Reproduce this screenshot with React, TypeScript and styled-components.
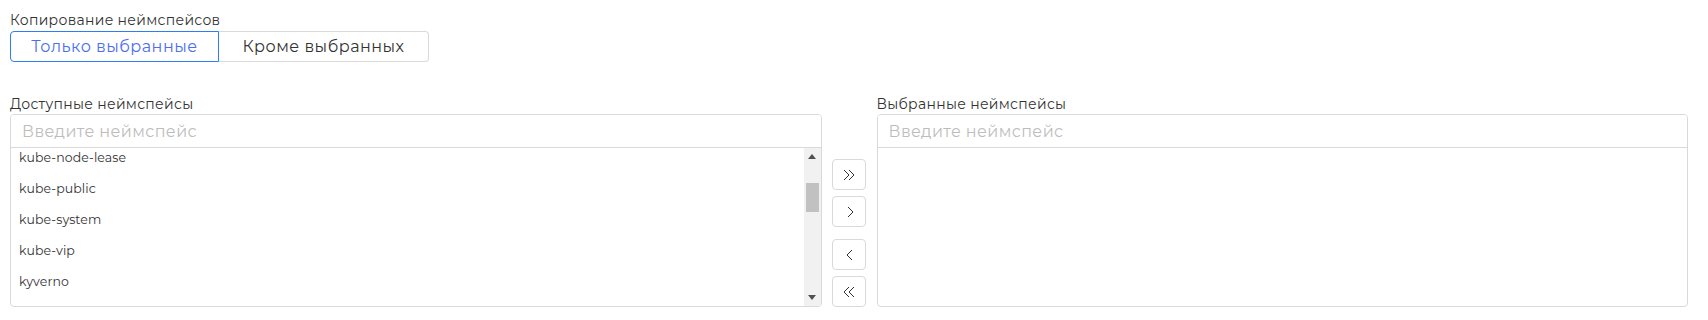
import React, { useEffect, useRef } from 'react'
import styled, { createGlobalStyle } from 'styled-components'

const ROW_HEIGHT = 31
const LIST_HEIGHT = 158
const ARROW_SIZE = 17
const SCROLL_TOP = 99

const namespaces = [
  'argocd',
  'cert-manager',
  'default',
  'kube-node-lease',
  'kube-public',
  'kube-system',
  'kube-vip',
  'kyverno',
  'longhorn-system',
  'metallb-system',
  'monitoring',
  'logging',
  'ingress-nginx',
  'vault',
  'velero',
  'harbor',
  'gitlab-runner',
  'istio-system',
  'keycloak',
  'postgres',
  'redis',
  'minio',
]

const GlobalStyle = createGlobalStyle`
  body {
    margin: 0;
    background: #fff;
    font-family: Montserrat, Inter, "Open Sans", sans-serif;
    color: #333;
  }
`

const Page = styled.div`
  padding: 10px 20px 0 10px;
`

const Label = styled.div`
  font-size: 14px;
  line-height: 20px;
  letter-spacing: 0.3px;
  color: #333;
`

const Toggle = styled.div`
  display: flex;
  margin-top: 1px;
`

const ToggleButton = styled.button<{ $active?: boolean; $side: 'left' | 'right' }>`
  width: ${(p) => (p.$side === 'left' ? 209 : 210)}px;
  height: 31px;
  font-family: inherit;
  font-size: 16px;
  letter-spacing: 0.5px;
  background: #fff;
  cursor: pointer;
  color: ${(p) => (p.$active ? '#4a6df5' : '#333')};
  border: 1px solid ${(p) => (p.$active ? '#2f7cf6' : '#d9d9d9')};
  ${(p) => (p.$side === 'right' ? 'border-left: none;' : '')}
  border-radius: ${(p) => (p.$side === 'left' ? '4px 0 0 4px' : '0 4px 4px 0')};
`

const DualList = styled.div`
  display: grid;
  grid-template-columns: 1fr 55px 1fr;
  margin-top: 32px;
`

const Column = styled.div`
  display: flex;
  flex-direction: column;
`

const Panel = styled.div`
  border: 1px solid #d9d9d9;
  border-radius: 4px;
  display: flex;
  flex-direction: column;
  overflow: hidden;
`

const Search = styled.input`
  height: 32px;
  border: none;
  border-bottom: 1px solid #d9d9d9;
  padding: 0 11px;
  font-family: inherit;
  font-size: 16px;
  letter-spacing: 0.4px;
  outline: none;
  color: #333;
  &::placeholder {
    color: #bdbdbd;
  }
`

const ListArea = styled.div`
  display: flex;
  height: ${LIST_HEIGHT}px;
`

const List = styled.ul`
  flex: 1;
  margin: 0;
  padding: 0;
  list-style: none;
  overflow: hidden;
`

const Item = styled.li`
  height: ${ROW_HEIGHT}px;
  line-height: ${ROW_HEIGHT}px;
  padding-left: 8px;
  font-size: 12.5px;
  letter-spacing: 0.1px;
  color: #333;
`

const Scrollbar = styled.div`
  width: 17px;
  background: #f1f1f1;
  display: flex;
  flex-direction: column;
`

const ArrowBox = styled.div`
  height: ${ARROW_SIZE}px;
  display: flex;
  align-items: center;
  justify-content: center;
`

const Track = styled.div`
  flex: 1;
  position: relative;
`

const Thumb = styled.div`
  position: absolute;
  left: 2px;
  right: 2px;
  background: #c1c1c1;
`

const Transfer = styled.div`
  align-self: end;
  display: flex;
  flex-direction: column;
  align-items: center;
  gap: 12px;
`

const ButtonGroup = styled.div`
  display: flex;
  flex-direction: column;
  gap: 6px;
`

const MoveButton = styled.button<{ $shift?: number }>`
  width: 34px;
  height: 31px;
  padding: 0 0 0 ${(p) => (p.$shift ?? 0) * 2}px;
  border: 1px solid #d9d9d9;
  border-radius: 4px;
  background: #fff;
  display: flex;
  align-items: center;
  justify-content: center;
  cursor: pointer;
  color: #333;
`

const Empty = styled.div`
  height: ${LIST_HEIGHT}px;
`

function Chevron({ dir, double }: { dir: 'left' | 'right'; double?: boolean }) {
  const one = dir === 'right' ? 'M0 0 L5 5 L0 10' : 'M5 0 L0 5 L5 10'
  return (
    <svg width={double ? 12 : 7} height="12" viewBox={double ? '-1 -1 12 12' : '-1 -1 7 12'}>
      <path d={one} fill="none" stroke="#333" strokeWidth="1" />
      {double ? <path d={one} transform="translate(5 0)" fill="none" stroke="#333" strokeWidth="1" /> : null}
    </svg>
  )
}

function Triangle({ up }: { up?: boolean }) {
  return (
    <svg width="8" height="5" viewBox="0 0 8 5">
      <path d={up ? 'M0 5 L4 0 L8 5 Z' : 'M0 0 L4 5 L8 0 Z'} fill="#505050" />
    </svg>
  )
}

function NamespaceList() {
  const ref = useRef<HTMLUListElement>(null)
  useEffect(() => {
    if (ref.current) ref.current.scrollTop = SCROLL_TOP
  }, [])

  const total = namespaces.length * ROW_HEIGHT
  const track = LIST_HEIGHT - ARROW_SIZE * 2
  const thumbHeight = (LIST_HEIGHT / total) * track
  const thumbTop = (SCROLL_TOP / total) * track

  return (
    <ListArea>
      <List ref={ref}>
        {namespaces.map((ns) => (
          <Item key={ns}>{ns}</Item>
        ))}
      </List>
      <Scrollbar>
        <ArrowBox>
          <Triangle up />
        </ArrowBox>
        <Track>
          <Thumb style={{ top: thumbTop, height: thumbHeight }} />
        </Track>
        <ArrowBox>
          <Triangle />
        </ArrowBox>
      </Scrollbar>
    </ListArea>
  )
}

export default function App() {
  return (
    <Page>
      <GlobalStyle />
      <Label>Копирование неймспейсов</Label>
      <Toggle>
        <ToggleButton $active $side="left">
          Только выбранные
        </ToggleButton>
        <ToggleButton $side="right">Кроме выбранных</ToggleButton>
      </Toggle>

      <DualList>
        <Column>
          <Label>Доступные неймспейсы</Label>
          <Panel>
            <Search placeholder="Введите неймспейс" />
            <NamespaceList />
          </Panel>
        </Column>

        <Transfer>
          <ButtonGroup>
            <MoveButton>
              <Chevron dir="right" double />
            </MoveButton>
            <MoveButton $shift={1}>
              <Chevron dir="right" />
            </MoveButton>
          </ButtonGroup>
          <ButtonGroup>
            <MoveButton $shift={-1}>
              <Chevron dir="left" />
            </MoveButton>
            <MoveButton>
              <Chevron dir="left" double />
            </MoveButton>
          </ButtonGroup>
        </Transfer>

        <Column>
          <Label>Выбранные неймспейсы</Label>
          <Panel>
            <Search placeholder="Введите неймспейс" />
            <Empty />
          </Panel>
        </Column>
      </DualList>
    </Page>
  )
}
